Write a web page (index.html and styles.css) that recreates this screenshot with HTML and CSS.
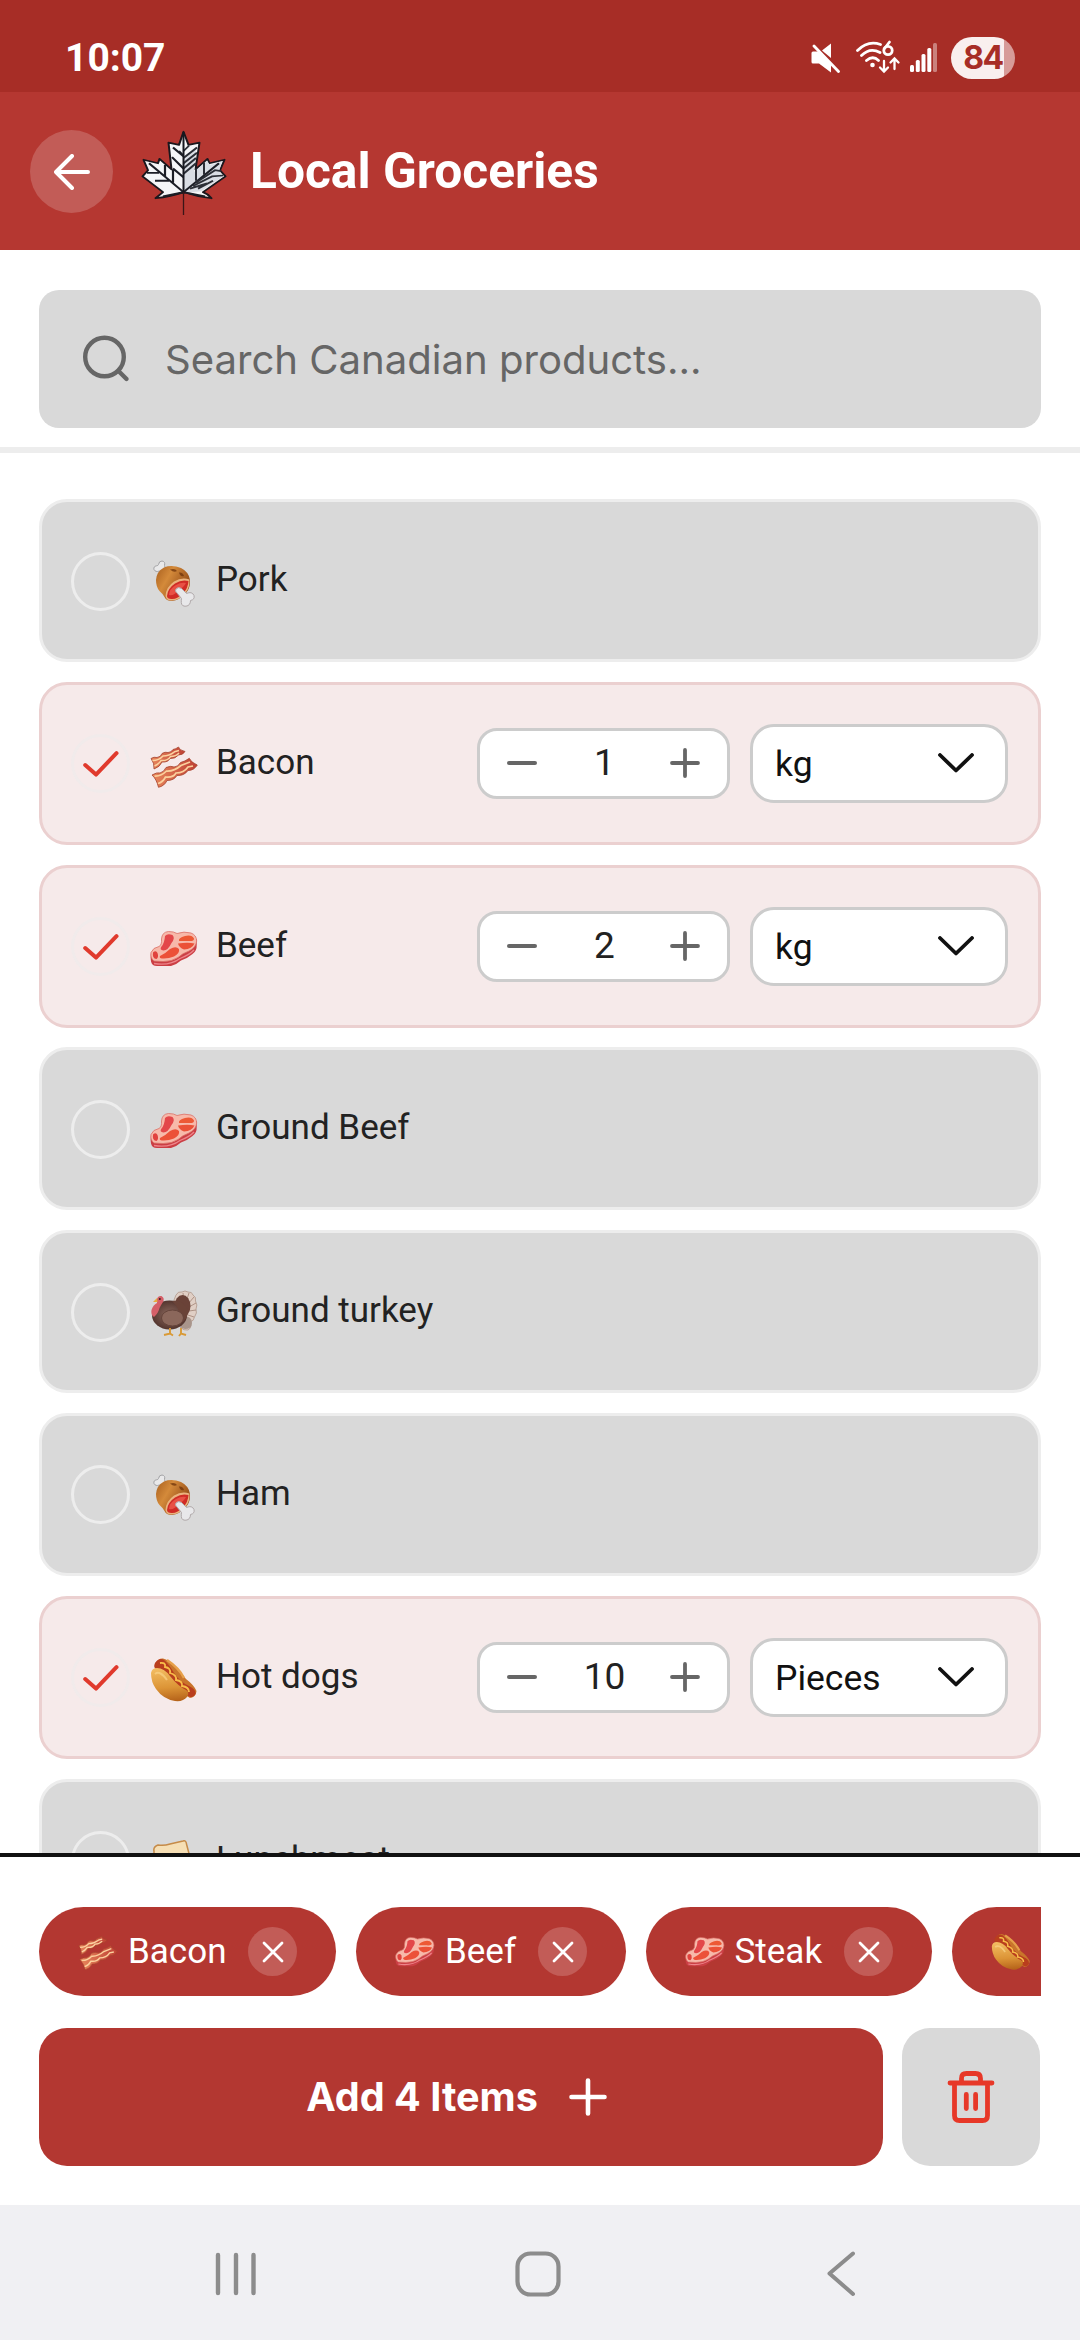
FILE: index.html
```html
<!DOCTYPE html>
<html lang="en">
<head>
<meta charset="utf-8">
<title>Local Groceries</title>
<link rel="stylesheet" href="styles.css">
</head>
<body>
<svg class="defs" width="0" height="0" aria-hidden="true">
  <defs>
    <linearGradient id="g-meat" x1="0" y1="0" x2="1" y2="0.6"><stop offset="0" stop-color="#a85f1e"/><stop offset="0.4" stop-color="#d48a3a"/><stop offset="1" stop-color="#8a4312"/></linearGradient>
    <linearGradient id="g-bacon" x1="0" y1="0" x2="1" y2="0"><stop offset="0" stop-color="#e8875c"/><stop offset="1" stop-color="#bf4034"/></linearGradient>
    <linearGradient id="g-bun" x1="0.3" y1="0" x2="0.4" y2="1"><stop offset="0" stop-color="#f3bd62"/><stop offset="0.6" stop-color="#dc9436"/><stop offset="1" stop-color="#b7651b"/></linearGradient>
    <radialGradient id="g-turkey"><stop offset="0" stop-color="#8d6b60"/><stop offset="1" stop-color="#54352e"/></radialGradient>

    <symbol id="e-pork" viewBox="0 0 48 48">
      <path d="M13 13L9.500 12Q5.500 13.500 4 10.500Q3.200 7.500 6.500 6.800Q8 6.800 8.500 5.500Q9 2 12 2Q15.500 2.500 14.500 6.500L15.500 10Z" fill="#e9e9ea" stroke="#a2a2a5" stroke-width="1"/>
      <path d="M6 21Q6.500 12.500 14 8.500Q22 5.500 31 9Q39 13 40 21Q40.500 29 36 34Q29 41.500 22 42Q16 42 14.500 38Q13 35 9.500 32Q6 28 6 21Z" fill="url(#g-meat)"/>
      <path d="M20 10.500Q25 9 27 12Q24 14 20 10.500ZM29 13.500Q33 13 34 17Q30 18 29 13.500Z" fill="#6e330b" opacity=".75"/>
      <path d="M15.500 37Q16 28 24 22.500Q32 17.500 39.500 20.500Q40 29 35.500 34Q29 41.500 22 41.500Q16.500 42 15.500 37Z" fill="#eab37e"/>
      <path d="M17 37Q17.500 29.500 25 24.500Q32 20 38.500 22Q38 29 33.500 34Q27 40.500 21.500 40Q17 40 17 37Z" fill="#d02c26"/>
      <path d="M19 36Q19 30 26 26Q31 23 36 24Q34 28 28 32Q24 37 19 36Z" fill="#e85145"/>
      <path d="M26 30Q28.500 27.500 31.500 29.500L36.500 34.500Q42 32 44 36.500Q45 40.500 40.500 41.500Q40.500 46.500 36 47.200Q31.500 47.500 31.300 43.500Q31.200 41 31.500 39.500L27 34Q24.500 32 26 30Z" fill="#e8e8ea" stroke="#b0a9aa" stroke-width="1"/>
    </symbol>

    <symbol id="e-bacon" viewBox="0 0 48 48">
      <path d="M1 16.500Q4 14.500 7 15.500Q11 15 12 11.500Q15 9.500 18 10.500Q21 10.500 23 7.500Q26 7 28.500 5Q29 8 35 9.500Q33 13 28.500 13Q25 17 20 16.500Q18 20.500 12 20Q10 25 4 27Q4.500 21 1 16.500Z" fill="url(#g-bacon)" stroke="#a6442d" stroke-width=".8"/>
      <path d="M2.500 18.500Q9 18.500 13 14Q19 14 24.500 9.800L29 8.500M4.500 24Q9 22 11 18.500Q18 19 20.500 14.500Q26 14.500 29 11" fill="none" stroke="#fbd3a1" stroke-width="1.500"/>
      <path d="M2 33Q7 30 10 31Q14 30 16 25.500Q21 23.500 24 25Q28 25 30.500 20.500Q35 19.500 39.300 16.300Q41 20.500 47.300 23Q44 28.500 38 28.500Q34 34 27 33.500Q24 38.500 17 38.500Q14.500 44 8.500 45.300Q6.500 37 2 33Z" fill="url(#g-bacon)" stroke="#a6442d" stroke-width=".8"/>
      <path d="M4.500 34Q11 34.500 16.500 29Q24 29.500 31 23.500L40 20M8 41.500Q13 40 15.500 35Q23 36 26 31Q34 31 38 25L43 24" fill="none" stroke="#fbd09c" stroke-width="1.700"/>
    </symbol>

    <symbol id="e-steak" viewBox="0 0 48 48">
      <path d="M1 28Q.3 33 1 36.500Q2 41 7 41H21Q26 40 31 35.500Q38 33 42.500 29Q47 26 46.700 20V14L30 18Z" fill="#cb3f45"/>
      <path d="M1 27.500Q3 22.500 9 21.500Q12 20 11.500 14Q12 7 18.500 6.500Q24 6.500 27 8.500Q34 6 41 8Q46.500 10 46.700 16Q46 22.500 39 26Q33 28 28 32.500Q22 36.500 13 36.500L4 36Q0 33 1 27.500Z" fill="#f7b9aa" stroke="#da7168" stroke-width=".8"/>
      <path d="M15 11Q17.500 8 22.500 10Q25.500 13 21.500 18Q18 25.500 13.500 25.500Q9 25 11.500 21.500Q14.500 18 15 11Z" fill="#e3474a"/>
      <path d="M35 11Q42 9.500 44 13.500Q44.500 16.500 38 16H29Q28 13 35 11Z" fill="#ed5935"/>
      <path d="M28 18.500Q38 17 44.500 18.500Q42 24 34 24.500Q29 22.500 28 18.500Z" fill="#eb5137"/>
      <path d="M10 31Q16 28 20 24Q26 20.500 29 24Q30 28 24 31.500Q18 34 12 33.500Q9 33 10 31Z" fill="#ec5138"/>
      <path d="M3 27.500Q6 25 7.500 28Q9 32 6.500 34Q2 34 3 27.500Z" fill="#e1423e"/>
      <path d="M4 38.500Q20 41 30 33.500Q40 29.500 44 25" fill="none" stroke="#ee858a" stroke-width="1.300"/>
    </symbol>

    <symbol id="e-turkey" viewBox="0 0 48 48">
      <path d="M26 5Q28 1 32 2Q35 0 38 2Q42 1.500 43 5Q46.500 7 45.500 11Q48 15 46 19Q47.500 23 44.500 27Q44 31 40 32Q42 38 38 40Q34 41 30 37L24 10Z" fill="#e0cfc5" stroke="#a98f82" stroke-width=".7"/>
      <path d="M34 11L33 3M36 12L39 3M38 14L44 7M39 17L46 13M39 21L46 20M38 25L44 27" stroke="#a78b7e" stroke-width=".9"/>
      <ellipse cx="32.500" cy="16" rx="8" ry="11" fill="#6a4238"/>
      <path d="M31 26Q42 25 42 33Q42 39 35 39Q29 38 27 33Z" fill="#a9958b"/>
      <ellipse cx="19.500" cy="25" rx="17.500" ry="14.500" fill="url(#g-turkey)"/>
      <path d="M22 11Q32 9 38 20Q39 28 30 34Q32 20 22 11Z" fill="#6a4338"/>
      <ellipse cx="22.500" cy="28" rx="11" ry="8" fill="#8b675b" stroke="#64433a" stroke-width="1"/>
      <path d="M7 9Q8 5.500 11.500 6Q15 8 13 12Q11 15 9.500 18Q8.500 23 4 27Q.5 25 1.500 20Q3 15 7 13Z" fill="#d55f68"/>
      <path d="M7 8L3 12L7.500 12Z" fill="#e9ad3e"/><circle cx="9.800" cy="9" r="1" fill="#3e1f1b"/>
      <path d="M20 38V43M14 45L20 43.500L23 45.500M31 38V43M29 46L31 43.500L36 45" fill="none" stroke="#d99a36" stroke-width="1.900"/>
    </symbol>

    <symbol id="e-hotdog" viewBox="0 0 48 48">
      <path d="M6 8Q8 2 13 2.500Q19 4 24 9Q29 14 36 23Q44 29 46.500 35Q46 41 40 42L27 34L10 16Z" fill="#c9752b"/>
      <path d="M5 7Q9 1 14 4Q19 8 24 17Q30 26 39 30Q46 33 45.500 38Q43 43 38 40Q27 35 19 24Q10 12 6 13Q3 11 5 7Z" fill="#b93e1d"/>
      <path d="M1 17Q2 12 7 12Q14 12 20 20Q28 30 36 34Q40 36 37 41Q33 46 25 45Q13 43 6 33Q1 26 1 17Z" fill="url(#g-bun)"/>
      <path d="M10 7Q16 6 15 11Q21 12 20 17Q27 19 26 24Q33 25 32 30Q39 31 39 36" fill="none" stroke="#f8bd49" stroke-width="1.800"/>
      <path d="M17 4Q29 12 34 22" fill="none" stroke="#e7a04a" stroke-width="2.500"/>
      <path d="M5 18Q10 14 17 24" fill="none" stroke="#fbd58c" stroke-width="2" opacity=".65"/>
    </symbol>

    <symbol id="e-bread" viewBox="0 0 48 48">
      <path d="M4 12Q3 8 8 6Q14 7 20 5L33 2Q36 1 36.500 5L42 26L24 40L4 30Z" fill="#f6dfb5" stroke="#c68b48" stroke-width="1.500"/>
      <path d="M4 28L22 36L42 24V32L23 44L4 34Z" fill="#d8954b"/>
    </symbol>

    <symbol id="i-check" viewBox="0 0 36 28"><path d="M2.200 15L13 24.600L33.500 3.200" fill="none" stroke="currentColor" stroke-width="4" stroke-linecap="round" stroke-linejoin="round"/></symbol>
    <symbol id="i-minus" viewBox="0 0 30 30"><path d="M2 15H28" stroke="currentColor" stroke-width="4" stroke-linecap="round"/></symbol>
    <symbol id="i-plus" viewBox="0 0 30 30"><path d="M2 15H28M15 2V28" stroke="currentColor" stroke-width="3.800" stroke-linecap="round"/></symbol>
    <symbol id="i-chevron" viewBox="0 0 36 20"><path d="M2 2L18 17.500L34 2" fill="none" stroke="currentColor" stroke-width="3.800" stroke-linecap="round" stroke-linejoin="round"/></symbol>
    <symbol id="i-close" viewBox="0 0 22 22"><path d="M2 2L20 20M20 2L2 20" stroke="currentColor" stroke-width="2.800" stroke-linecap="round"/></symbol>
  </defs>
</svg>

<div class="screen">
  <div class="status">
    <span class="clock">10:07</span>
    <div class="indicators">
      <svg class="mute" width="30" height="32" viewBox="0 0 30 32"><path d="M1.500 11Q1.500 9.500 3 9.500H8L21 21V30.500L9 21.500H3Q1.500 21.500 1.500 20ZM21 1.500V16L12 8.500Z" fill="#fff"/><path d="M4 4L28.500 29.500" stroke="#fff" stroke-width="2.800" stroke-linecap="round"/></svg>
      <svg class="wifi" width="46" height="34" viewBox="0 0 46 34"><g fill="none" stroke="#fff" stroke-width="2.800" stroke-linecap="round"><path d="M2.500 10.500Q13 0 25.500 4.500M6.500 15.500Q15 7 25 12.500M11.500 20.500Q18 15 23.500 20.500"/><path d="M34.500 2L29.500 8.500" /><circle cx="33" cy="10.500" r="4.200"/><path d="M29 21V31M25 27.500L29 31.500L33 27.500M39.500 29V19M35.500 22.500L39.500 18.500L43.500 22.500" stroke-width="2.300"/></g><circle cx="17.500" cy="25" r="2.300" fill="#fff"/></svg>
      <svg class="signal" width="28" height="31" viewBox="0 0 28 31" fill="#fff"><rect x="0" y="23" width="4" height="7" rx="1.500"/><rect x="5.800" y="18" width="4" height="12" rx="1.500"/><rect x="11.500" y="12" width="4" height="18" rx="1.500"/><rect x="17.300" y="6" width="4" height="24" rx="1.500"/><rect x="23" y="1" width="4" height="29" rx="1.500" opacity=".4"/></svg>
      <span class="battery">84</span>
    </div>
  </div>

  <header class="header">
    <button class="back"><svg width="36" height="36" viewBox="0 0 36 36"><path d="M18 2L2 18L18 34M2.500 18H34" fill="none" stroke="#fff" stroke-width="4" stroke-linecap="round" stroke-linejoin="round"/></svg></button>
    <svg class="leaf" width="86" height="86" viewBox="0 0 86 86">
      <g transform="matrix(1 0 0 .875 0 0)">
      <path d="M42.500 2L47.500 17L58.500 14.500L54.500 45L66.500 33L68.500 38L83.500 34L79 46L84.500 53L62 71Q67 73 70.500 78Q56 76 43 71Q30 76 14.500 78L22 71L1.500 53L7 46L2.500 34L17 38L18.500 33L30.500 45L27.500 14.500L38 17Z" fill="#f5f6f8" stroke="#1b171d" stroke-width="2" stroke-linejoin="round"/>
      <path d="M43 72V34L55 20L53 48L66 35L69 40L81 36L78 47L82 53L60 70Z" fill="#d9dde4"/>
      <path d="M42.500 71L8 38M42.500 71L78 38M42.500 71L22 76M42.500 71L64 76M42.500 30L32 20M42.500 44L31 31M42.500 54L32 44M32 60V45M24 54V40M28 58H14M18 49H6M38 24L42 29" fill="none" stroke="#1c1e26" stroke-width="2.200"/>
      <path d="M42.500 32L56 20M42.500 38L56 26M42.500 44L55 32M42.500 50L55 38M42.500 24L48 18M55 58V44M63 51V37M55 60L74 46L80 47M52 64L71 53L82 52M57 67L72 58M49 67L66 61" fill="none" stroke="#2b2e36" stroke-width="2"/>
      </g>
      <path d="M42.500 2V64" stroke="#171820" stroke-width="2"/>
      <path d="M42.500 62V85" stroke="#3a1517" stroke-width="1.300"/>
    </svg>
    <h1 class="title">Local Groceries</h1>
  </header>

  <div class="search-area">
    <div class="search">
      <svg width="48" height="48" viewBox="0 0 48 48"><g fill="none" stroke="#666" stroke-width="4.400" stroke-linecap="round"><circle cx="22.500" cy="22" r="19.300"/><path d="M36.500 36L44.500 44"/></g></svg>
      <span class="placeholder">Search Canadian products...</span>
    </div>
  </div>

  <main class="list">
    <div class="item"><span class="tick"></span><svg class="emoji"><use href="#e-pork"/></svg><span class="name">Pork</span></div>
    <div class="item selected"><span class="tick"><svg class="check"><use href="#i-check"/></svg></span><svg class="emoji"><use href="#e-bacon"/></svg><span class="name">Bacon</span>
      <div class="stepper"><svg class="sign"><use href="#i-minus"/></svg><span class="qty">1</span><svg class="sign"><use href="#i-plus"/></svg></div>
      <div class="unit"><span>kg</span><svg class="chevron"><use href="#i-chevron"/></svg></div></div>
    <div class="item selected"><span class="tick"><svg class="check"><use href="#i-check"/></svg></span><svg class="emoji"><use href="#e-steak"/></svg><span class="name">Beef</span>
      <div class="stepper"><svg class="sign"><use href="#i-minus"/></svg><span class="qty">2</span><svg class="sign"><use href="#i-plus"/></svg></div>
      <div class="unit"><span>kg</span><svg class="chevron"><use href="#i-chevron"/></svg></div></div>
    <div class="item"><span class="tick"></span><svg class="emoji"><use href="#e-steak"/></svg><span class="name">Ground Beef</span></div>
    <div class="item"><span class="tick"></span><svg class="emoji"><use href="#e-turkey"/></svg><span class="name">Ground turkey</span></div>
    <div class="item"><span class="tick"></span><svg class="emoji"><use href="#e-pork"/></svg><span class="name">Ham</span></div>
    <div class="item selected"><span class="tick"><svg class="check"><use href="#i-check"/></svg></span><svg class="emoji"><use href="#e-hotdog"/></svg><span class="name">Hot dogs</span>
      <div class="stepper"><svg class="sign"><use href="#i-minus"/></svg><span class="qty">10</span><svg class="sign"><use href="#i-plus"/></svg></div>
      <div class="unit"><span>Pieces</span><svg class="chevron"><use href="#i-chevron"/></svg></div></div>
    <div class="item"><span class="tick"></span><svg class="emoji"><use href="#e-bread"/></svg><span class="name">Lunchmeat</span></div>
  </main>

  <footer class="footer">
    <div class="chips">
      <div class="chip"><svg class="chip-emoji"><use href="#e-bacon"/></svg><span class="chip-name">Bacon</span><span class="remove"><svg><use href="#i-close"/></svg></span></div>
      <div class="chip"><svg class="chip-emoji"><use href="#e-steak"/></svg><span class="chip-name">Beef</span><span class="remove"><svg><use href="#i-close"/></svg></span></div>
      <div class="chip"><svg class="chip-emoji"><use href="#e-steak"/></svg><span class="chip-name">Steak</span><span class="remove"><svg><use href="#i-close"/></svg></span></div>
      <div class="chip last"><svg class="chip-emoji"><use href="#e-hotdog"/></svg></div>
    </div>
    <div class="actions">
      <button class="add"><span>Add 4 Items</span><svg width="38" height="38" viewBox="0 0 38 38"><path d="M2.500 19H35.500M19 2.500V35.500" stroke="#fff" stroke-width="4.600" stroke-linecap="round"/></svg></button>
      <button class="clear"><svg width="48" height="54" viewBox="0 0 48 54"><g fill="none" stroke="#e73828" stroke-width="4.800" stroke-linecap="round" stroke-linejoin="round"><path d="M3 13H45M7.500 13V45.500Q7.500 50.500 12.500 50.500H35.500Q40.500 50.500 40.500 45.500V13M14.500 12V8.500Q14.500 3.500 19.500 3.500H28.500Q33.500 3.500 33.500 8.500V12M19.300 24.500V38.500M28.600 24.500V38.500"/></g></svg></button>
    </div>
  </footer>

  <nav class="nav">
    <svg width="42" height="46" viewBox="0 0 42 46"><path d="M3 4V42M21 4V42M38.500 4V42" stroke="#8c8c8c" stroke-width="4.400" stroke-linecap="round"/></svg>
    <svg class="home" width="46" height="46" viewBox="0 0 46 46"><rect x="2.500" y="2.500" width="41" height="41" rx="13" fill="none" stroke="#8c8c8c" stroke-width="4.200"/></svg>
    <svg width="30" height="46" viewBox="0 0 30 46"><path d="M27 2.500L3.500 22.500L27 43" fill="none" stroke="#8c8c8c" stroke-width="4" stroke-linecap="round" stroke-linejoin="round"/></svg>
  </nav>
</div>
</body>
</html>
```

FILE: styles.css
```css
* { box-sizing: border-box; }
body { margin: 0; font-family: Roboto, "Liberation Sans", sans-serif; background: #fff; }
button { border: 0; padding: 0; font: inherit; }
svg { display: block; flex: none; }
.defs { position: absolute; }
.screen { width: 1080px; height: 2340px; display: flex; flex-direction: column; overflow: hidden; }

/* system status bar */
.status { height: 92px; flex: none; background: #a72d26; color: #fff; display: flex; justify-content: space-between; padding: 0 65px; }
.clock { font-size: 39px; font-weight: 700; line-height: 46px; padding-top: 35px; }
.indicators { display: flex; align-items: flex-start; }
.mute { margin: 42px 15px 0 0; }
.wifi { margin: 40px 9px 0 0; }
.signal { margin: 42px 13px 0 0; }
.battery { width: 64px; height: 42px; margin-top: 37px; border-radius: 21px; background: linear-gradient(90deg, #f9efee 53px, #d79b98 53px); color: #a72d26; font: 700 32px/42px Inter, sans-serif; letter-spacing: -1.5px; text-align: center; }

/* app header */
.header { height: 158px; flex: none; background: #b53731; display: flex; align-items: center; padding: 1px 0 0 30px; }
.back { width: 83px; height: 83px; border-radius: 50%; background: #c25c57; display: flex; align-items: center; justify-content: center; }
.leaf { margin: 2px 0 0 28px; }
.title { margin: 0 0 2px 23px; color: #fff; font-size: 49.7px; font-weight: 700; line-height: 60px; }

.search-area { height: 203px; flex: none; padding: 40px 39px 0; border-bottom: 6px solid #ededed; }
.search { height: 138px; border-radius: 20px; background: #d9d9d9; display: flex; align-items: center; padding-left: 43px; gap: 35px; }
.placeholder { font-family: Inter, sans-serif; font-size: 40.1px; line-height: 50px; padding-top: 1px; color: #666; }

/* product list */
.list { height: 1400px; flex: none; overflow: hidden; padding: 46px 39px 0; display: flex; flex-direction: column; gap: 19.8px; }
.item { height: 163px; flex: none; border: 3px solid #ededed; border-radius: 28px; background: #d9d9d9; display: flex; align-items: center; padding: 0 30px 0 29px; }
.item.selected { background: #f6eaea; border-color: #ebd0d0; }
.tick { width: 59px; height: 59px; border: 3px solid #ededed; border-radius: 50%; display: flex; align-items: center; justify-content: center; margin-top: 1px; flex: none; }
.selected .tick { border-color: #f1ebeb; }
.check { width: 36px; height: 28px; color: #e03a2d; }
.emoji { width: 48px; height: 48px; margin: 5px 0 0 20px; }
.name { flex: 1; margin-left: 18px; font-size: 35px; line-height: 42px; color: #222; padding-bottom: 1px; white-space: nowrap; }
.stepper { width: 253px; height: 71px; border: 3px solid #ccc; border-radius: 20px; background: #fff; display: flex; align-items: center; justify-content: space-between; padding: 0 27px; flex: none; }
.sign { width: 30px; height: 30px; color: #666; }
.qty { font-size: 37px; line-height: 44px; color: #222; padding-bottom: 1px; margin-left: 2px; }
.unit { width: 258px; height: 79px; margin-left: 20px; border: 3px solid #ccc; border-radius: 24px; background: #fff; display: flex; align-items: center; justify-content: space-between; padding: 0 31px 0 22px; font-size: 35.5px; line-height: 42px; color: #111; flex: none; }
.unit span { padding-top: 1px; }
.chevron { width: 36px; height: 20px; }

/* selection footer */
.footer { height: 352px; flex: none; border-top: 4px solid #111; padding: 50px 39px 0; }
.chips { display: flex; overflow: hidden; gap: 19.5px; }
.chip { height: 89px; flex: none; border-radius: 45px; background: #b33731; color: #fff; display: flex; align-items: center; padding: 0 39px; }
.chip.last { width: 200px; }
.chip-emoji { width: 40px; height: 40px; }
.chip-name { font-size: 35px; line-height: 42px; margin-left: 10px; }
.remove { width: 49px; height: 49px; border-radius: 50%; background: #c25c57; display: flex; align-items: center; justify-content: center; margin-left: 22px; }
.remove svg { width: 22px; height: 22px; }
.actions { display: flex; gap: 19px; margin-top: 32px; }
.add { width: 844px; height: 138px; border-radius: 28px; background: #b33731; color: #fff; display: flex; align-items: center; justify-content: center; gap: 31px; padding: 0 9px 1px 0; font-family: Inter, sans-serif; font-size: 39.6px; font-weight: 700; }
.clear { width: 138px; height: 138px; border-radius: 28px; background: #d9d9d9; display: flex; align-items: center; justify-content: center; }

/* system navigation */
.nav { height: 135px; flex: none; background: #f0f0f3; display: flex; align-items: center; justify-content: space-between; padding: 3px 224px 0 215px; }
.home { margin-right: 7px; }
```
